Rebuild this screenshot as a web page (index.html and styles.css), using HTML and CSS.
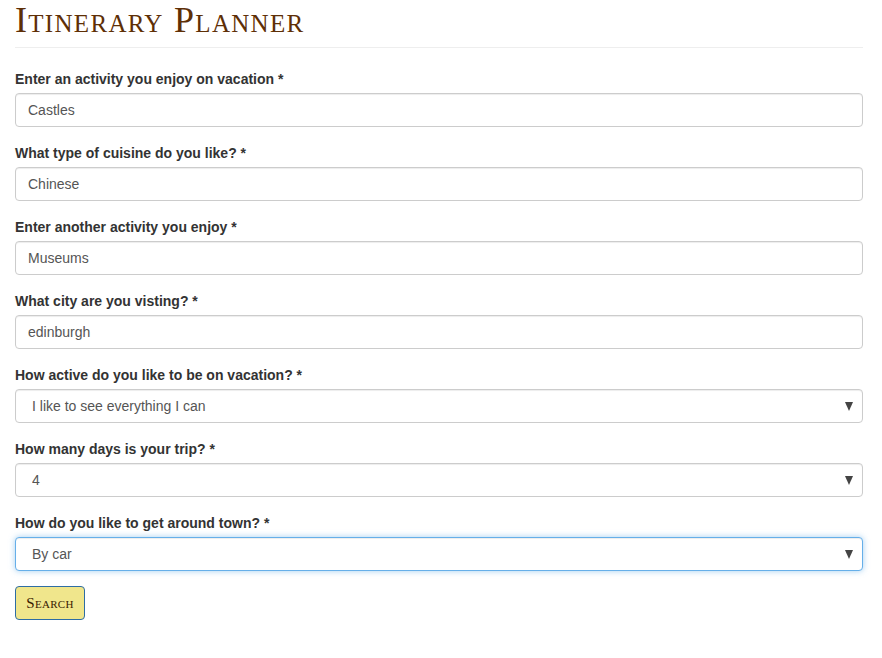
FILE: index.html
```html
<!DOCTYPE html>
<html>
<head>
<meta charset="utf-8">
<title>Itinerary Planner</title>
<link rel="stylesheet" href="styles.css">
</head>
<body>
<div class="container">
  <div class="page-header">
    <h1 class="title">Itinerary Planner</h1>
  </div>
  <form class="form">
    <div class="form-group">
      <label class="label">Enter an activity you enjoy on vacation *</label>
      <input class="control" type="text" value="Castles">
    </div>
    <div class="form-group">
      <label class="label">What type of cuisine do you like? *</label>
      <input class="control" type="text" value="Chinese">
    </div>
    <div class="form-group">
      <label class="label">Enter another activity you enjoy *</label>
      <input class="control" type="text" value="Museums">
    </div>
    <div class="form-group">
      <label class="label">What city are you visting? *</label>
      <input class="control" type="text" value="edinburgh">
    </div>
    <div class="form-group">
      <label class="label">How active do you like to be on vacation? *</label>
      <div class="select-wrap">
        <select class="control select">
          <option>I like to see everything I can</option>
        </select>
      </div>
    </div>
    <div class="form-group">
      <label class="label">How many days is your trip? *</label>
      <div class="select-wrap">
        <select class="control select">
          <option>4</option>
        </select>
      </div>
    </div>
    <div class="form-group">
      <label class="label">How do you like to get around town? *</label>
      <div class="select-wrap">
        <select class="control select focused">
          <option>By car</option>
        </select>
      </div>
    </div>
    <button class="btn" type="button">Search</button>
  </form>
</div>
</body>
</html>
```
FILE: styles.css
```css
* { box-sizing: border-box; }
html, body { margin: 0; padding: 0; background: #fff; }
body {
  font-family: "Liberation Sans", Arial, Helvetica, sans-serif;
  font-size: 14px;
  line-height: 20px;
  color: #333;
}
.container {
  padding: 0 19px 0 15px;
}
.page-header {
  padding-bottom: 7px;
  margin: 0 0 20px;
  border-bottom: 1px solid #eee;
}
.title {
  margin: 0;
  font-family: "Liberation Serif", "Times New Roman", serif;
  font-variant: small-caps;
  font-weight: 400;
  font-size: 36px;
  line-height: 40px;
  letter-spacing: 1.3px;
  color: #5e2f06;
}
.form-group {
  margin-bottom: 15px;
}
.label {
  display: block;
  font-weight: 700;
  line-height: 20px;
  margin-bottom: 4px;
  padding-top: 1px;
  max-width: 100%;
}
.control {
  display: block;
  width: 100%;
  height: 34px;
  padding: 6px 12px;
  font-family: "Liberation Sans", Arial, Helvetica, sans-serif;
  font-size: 14px;
  line-height: 20px;
  color: #555;
  background: #fff;
  border: 1px solid #ccc;
  border-radius: 4px;
  box-shadow: inset 0 1px 1px rgba(0,0,0,.075);
  outline: none;
}
.select-wrap {
  position: relative;
}
.select {
  -webkit-appearance: none;
  appearance: none;
  padding-left: 16px;
}
.select-wrap::after {
  content: "";
  position: absolute;
  right: 10px;
  top: 13px;
  border-left: 4.5px solid transparent;
  border-right: 4.5px solid transparent;
  border-top: 9px solid #444;
  pointer-events: none;
}
.focused {
  border-color: #66afe9;
  box-shadow: inset 0 1px 1px rgba(0,0,0,.075), 0 0 6px rgba(102,175,233,.6);
}
.btn {
  display: inline-block;
  height: 34px;
  width: 70px;
  padding: 6px 0;
  font-family: "Liberation Serif", "Times New Roman", serif;
  font-variant: small-caps;
  font-size: 15px;
  letter-spacing: 0.3px;
  color: #3a2000;
  background: #f0e68c;
  border: 1px solid #2e6da4;
  border-radius: 4px;
}
```
